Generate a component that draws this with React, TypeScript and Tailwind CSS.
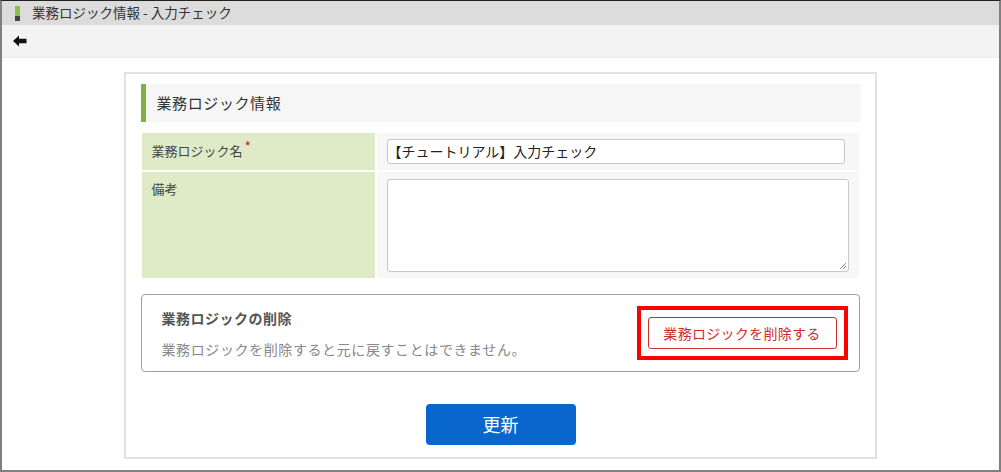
import React from "react";

export default function App() {
  return (
    <div
      className="w-[1001px] h-[472px] overflow-hidden bg-white border-t border-t-[#222] border-l-2 border-r-2 border-b-2 border-[#808080] flex flex-col text-[#333]"
      style={{ fontFamily: '"Noto Sans CJK JP", "Noto Sans", sans-serif' }}
    >
      {/* Title bar */}
      <div className="h-[24px] bg-[#dcdcdc] flex items-center pl-[13px] shrink-0">
        <div className="w-[5px] h-[15px] flex flex-col mr-[12px]">
          <div className="h-[10px] bg-[#8bc34a]"></div>
          <div className="h-[5px] bg-[#444]"></div>
        </div>
        <span className="text-[13.5px] text-[#333] leading-none">業務ロジック情報 - 入力チェック</span>
      </div>
      {/* Toolbar */}
      <div className="h-[33px] bg-[#f3f3f3] flex items-center pl-[11px] shrink-0 border-b border-[#ececec]">
        <svg width="14" height="12" viewBox="0 0 14 12">
          <path d="M0 6 L6 0.5 L6 3.8 L13.5 3.8 L13.5 8.2 L6 8.2 L6 11.5 Z" fill="#111" />
        </svg>
      </div>
      {/* Content */}
      <div className="flex-1 flex justify-center pt-[14px]">
        <div className="w-[753px] ml-[-1px] h-[387px] border-2 border-[#e2e2e2] border-b-2 px-[15px] pt-[10px]">
          {/* Section heading */}
          <div className="h-[38px] bg-[#f6f6f6] border-l-[5px] border-[#82b040] flex items-center pl-[11px] mr-[-1px]">
            <span className="text-[15px] text-[#333] tracking-[0.6px]">業務ロジック情報</span>
          </div>
          {/* Table */}
          <div className="mt-[11px] flex flex-col gap-[2px] ml-[1px] mr-[1px]">
            <div className="flex gap-[2px] h-[37px]">
              <div className="w-[233px] bg-[#dfeac7] pl-[10px] pt-[7px] text-[13px] text-[#444]">
                業務ロジック名<span className="text-[#e0115f] text-[14px] relative top-[-4px] ml-[2px]">*</span>
              </div>
              <div className="flex-1 bg-[#f7f7f7] pl-[10px] pr-[14px] flex items-center">
                <div className="w-full h-[25px] bg-white border border-[#c8c8c8] rounded-[3px] flex items-center pl-[0px] text-[14px] text-[#222]">
                  【チュートリアル】入力チェック
                </div>
              </div>
            </div>
            <div className="flex gap-[2px] h-[106px]">
              <div className="w-[233px] bg-[#dfeac7] pl-[10px] pt-[7px] text-[13px] text-[#444]">備考</div>
              <div className="flex-1 bg-[#f7f7f7] pl-[10px] pr-[10px] pt-[7px]">
                <div className="relative w-full h-[93px] bg-white border border-[#c8c8c8] rounded-[3px]">
                  <svg className="absolute right-[1px] bottom-[1px]" width="8" height="8" viewBox="0 0 8 8">
                    <path d="M7 1 L1 7 M7 4 L4 7" stroke="#888" strokeWidth="1" />
                  </svg>
                </div>
              </div>
            </div>
          </div>
          {/* Delete box */}
          <div className="mt-[16px] h-[78px] border border-[#a0a0a0] rounded-[4px] flex items-center justify-between pl-[20px] pr-[11px]">
            <div className="flex flex-col">
              <span className="text-[14px] font-bold text-[#555] leading-none tracking-[0.5px]">業務ロジックの削除</span>
              <span className="text-[14px] text-[#888] leading-none mt-[17px] tracking-[0.6px]">業務ロジックを削除すると元に戻すことはできません。</span>
            </div>
            <div className="border-4 border-[#ff0000] px-[7px] py-[7px]">
              <div className="w-[189px] h-[32px] border border-[#c9302c] rounded-[3px] flex items-center justify-center text-[14px] text-[#c9302c] tracking-[0.3px]">
                業務ロジックを削除する
              </div>
            </div>
          </div>
          {/* Update button */}
          <div className="flex justify-center mt-[32px]">
            <div className="w-[150px] h-[41px] ml-[1px] bg-[#0866cc] rounded-[4px] flex items-center justify-center text-white text-[18px]">
              更新
            </div>
          </div>
        </div>
      </div>
    </div>
  );
}
